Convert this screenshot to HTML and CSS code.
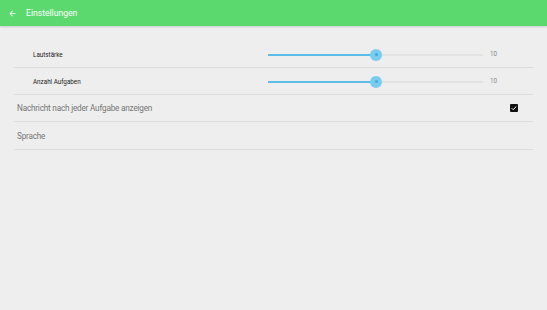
FILE: index.html
```html
<!DOCTYPE html>
<html lang="de">

<head>
    <meta charset="UTF-8">
    <meta name="viewport" content="width=device-width, initial-scale=1.0">
    <title>Einstellungen</title>
    <link rel="stylesheet" href="styles.css">
</head>

<body>

    <div class="toolbar">
        <svg class="back" viewBox="0 0 24 24" width="9" height="9">
            <path d="M20 11H7.83l5.59-5.59L12 4l-8 8 8 8 1.41-1.41L7.83 13H20v-2z" fill="#fff" />
        </svg>
        <span class="title">Einstellungen</span>
    </div>

    <div class="settings">
        <div class="row slider-row">
            <span class="small-label">Lautstärke</span>
            <div class="slider">
                <div class="track-fill"></div>
                <div class="thumb"><div class="dot"></div></div>
            </div>
            <span class="value">10</span>
        </div>
        <div class="row slider-row">
            <span class="small-label">Anzahl Aufgaben</span>
            <div class="slider">
                <div class="track-fill"></div>
                <div class="thumb"><div class="dot"></div></div>
            </div>
            <span class="value">10</span>
        </div>
        <div class="row check-row">
            <span class="label">Nachricht nach jeder Aufgabe anzeigen</span>
            <span class="checkbox">
                <svg viewBox="0 0 24 24" width="8" height="8">
                    <path d="M5 12.5l4.5 4.5L19 7.5" stroke="#fff" stroke-width="3" fill="none" />
                </svg>
            </span>
        </div>
        <div class="row">
            <span class="label">Sprache</span>
        </div>
    </div>

</body>

</html>
```

FILE: styles.css
```css
* {
    box-sizing: border-box;
    margin: 0;
    padding: 0;
    font-family: Roboto, "Noto Sans", sans-serif;
}

body {
    width: 547px;
    height: 310px;
    background-color: #eeeeee;
    overflow: hidden;
}

.toolbar {
    height: 26px;
    background-color: #5bd96e;
    display: flex;
    align-items: center;
    padding-left: 8px;
    box-shadow: 0 1px 2px rgba(0, 0, 0, 0.15);
}

.back {
    display: block;
}

.title {
    margin-left: 9px;
    color: #fff;
    font-size: 8.6px;
}

.settings {
    margin: 14.5px 14px 0 14px;
}

.row {
    height: 27.3px;
    border-bottom: 1px solid #dcdcdc;
    display: flex;
    align-items: center;
    padding-left: 3px;
}

.slider-row {
    padding-left: 19px;
    padding-top: 5px;
    align-items: flex-start;
}

.small-label {
    width: 235px;
    font-size: 6.3px;
    color: #222;
    padding-top: 5px;
}

.slider {
    position: relative;
    width: 215px;
    height: 2px;
    margin-top: 8px;
    background-color: #e2e2e2;
}

.track-fill {
    width: 108px;
    height: 2px;
    background-color: #5bbde8;
}

.thumb {
    position: absolute;
    left: 102px;
    top: -5px;
    width: 12px;
    height: 12px;
    border-radius: 50%;
    background-color: #79ccef;
    display: flex;
    align-items: center;
    justify-content: center;
}

.dot {
    width: 3px;
    height: 3px;
    border-radius: 50%;
    background-color: #3aaee0;
}

.value {
    margin-left: 7px;
    font-size: 6.3px;
    color: #888;
    padding-top: 4px;
}

.label {
    font-size: 8.2px;
    letter-spacing: -0.2px;
    color: #757575;
    flex: 1;
}

.check-row {
    padding-right: 15px;
}

.checkbox {
    width: 8px;
    height: 8px;
    background-color: #111;
    border-radius: 1px;
    display: flex;
    align-items: center;
    justify-content: center;
}

.checkbox svg {
    display: block;
}
```
